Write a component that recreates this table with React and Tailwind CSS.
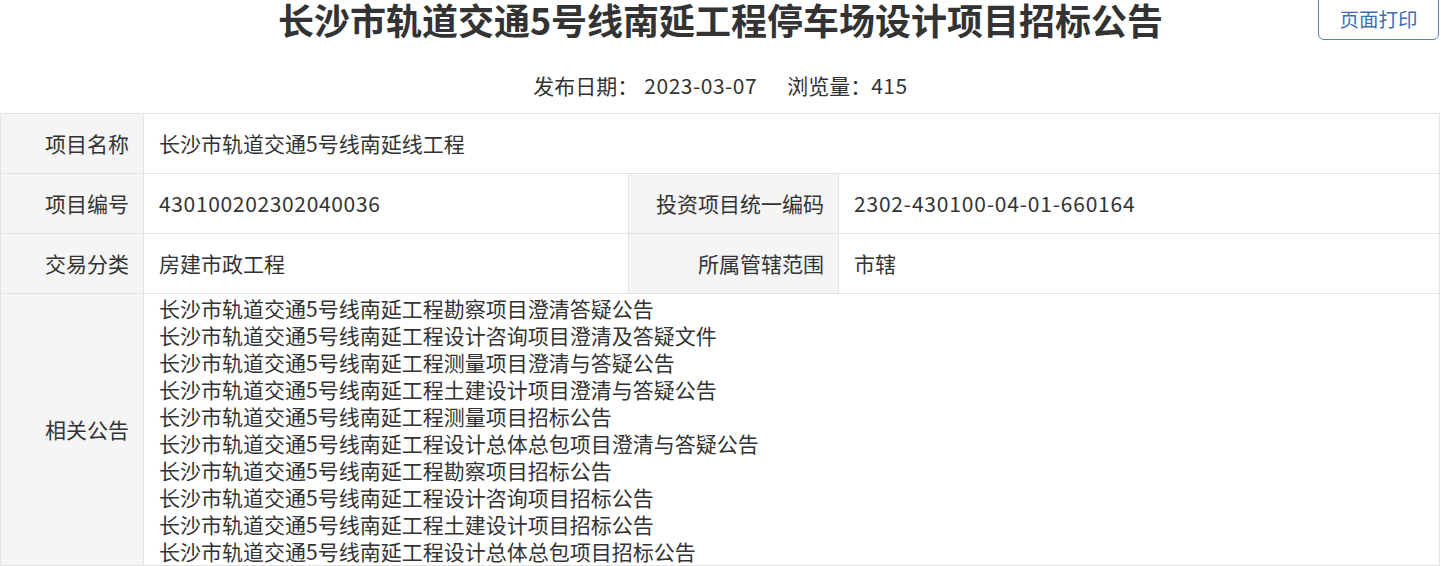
const related = [
  '长沙市轨道交通5号线南延工程勘察项目澄清答疑公告',
  '长沙市轨道交通5号线南延工程设计咨询项目澄清及答疑文件',
  '长沙市轨道交通5号线南延工程测量项目澄清与答疑公告',
  '长沙市轨道交通5号线南延工程土建设计项目澄清与答疑公告',
  '长沙市轨道交通5号线南延工程测量项目招标公告',
  '长沙市轨道交通5号线南延工程设计总体总包项目澄清与答疑公告',
  '长沙市轨道交通5号线南延工程勘察项目招标公告',
  '长沙市轨道交通5号线南延工程设计咨询项目招标公告',
  '长沙市轨道交通5号线南延工程土建设计项目招标公告',
  '长沙市轨道交通5号线南延工程设计总体总包项目招标公告',
];

function Label({ children, className = '' }) {
  return (
    <div className={`flex items-center justify-end bg-[#f5f5f5] border-r border-[#e3e3e3] pr-[14px] ${className}`}>
      {children}
    </div>
  );
}

export default function App() {
  return (
    <div className="relative w-[1441px] h-[566px] overflow-hidden bg-white text-[#333] font-['Noto_Sans_CJK_SC','Microsoft_YaHei',sans-serif]">
      <h1 className="h-[40px] text-center text-[36px] font-bold leading-[38px] text-[#333]">
        长沙市轨道交通5号线南延工程停车场设计项目招标公告
      </h1>
      <button className="absolute right-[2px] top-[-10px] h-[50px] w-[121px] rounded-[6px] border border-[#5a80c2] pt-[8px] text-[19.5px] leading-[30px] text-[#3f6db3]">
        页面打印
      </button>

      <div className="mt-[27px] flex h-[36px] items-center justify-center text-[21px] leading-[36px]">
        <span>发布日期：</span>
        <span className="ml-[6px] tracking-[0.5px]">2023-03-07</span>
        <span className="ml-[30px]">浏览量：</span>
        <span className="tracking-[0.5px]">415</span>
      </div>

      <div className="mt-[10px] w-[1440px] border-t border-l border-r border-[#e3e3e3] text-[21px]">
        <div className="flex h-[60px] border-b border-[#e3e3e3]">
          <Label className="w-[143px]">项目名称</Label>
          <div className="flex flex-1 items-center pl-[15px]">长沙市轨道交通5号线南延线工程</div>
        </div>
        <div className="flex h-[60px] border-b border-[#e3e3e3]">
          <Label className="w-[143px]">项目编号</Label>
          <div className="flex w-[485px] items-center border-r border-[#e3e3e3] pl-[15px] tracking-[0.65px]">430100202302040036</div>
          <Label className="w-[210px]">投资项目统一编码</Label>
          <div className="flex flex-1 items-center pl-[15px] tracking-[0.8px]">2302-430100-04-01-660164</div>
        </div>
        <div className="flex h-[60px] border-b border-[#e3e3e3]">
          <Label className="w-[143px]">交易分类</Label>
          <div className="flex w-[485px] items-center border-r border-[#e3e3e3] pl-[15px]">房建市政工程</div>
          <Label className="w-[210px]">所属管辖范围</Label>
          <div className="flex flex-1 items-center pl-[15px]">市辖</div>
        </div>
        <div className="flex border-b border-[#e3e3e3]">
          <Label className="w-[143px]">相关公告</Label>
          <div className="flex flex-1 flex-col pl-[15px] pt-[1px]">
            {related.map((t) => (
              <a key={t} className="block h-[27px] leading-[27px] text-[#333]">{t}</a>
            ))}
          </div>
        </div>
      </div>
    </div>
  );
}
